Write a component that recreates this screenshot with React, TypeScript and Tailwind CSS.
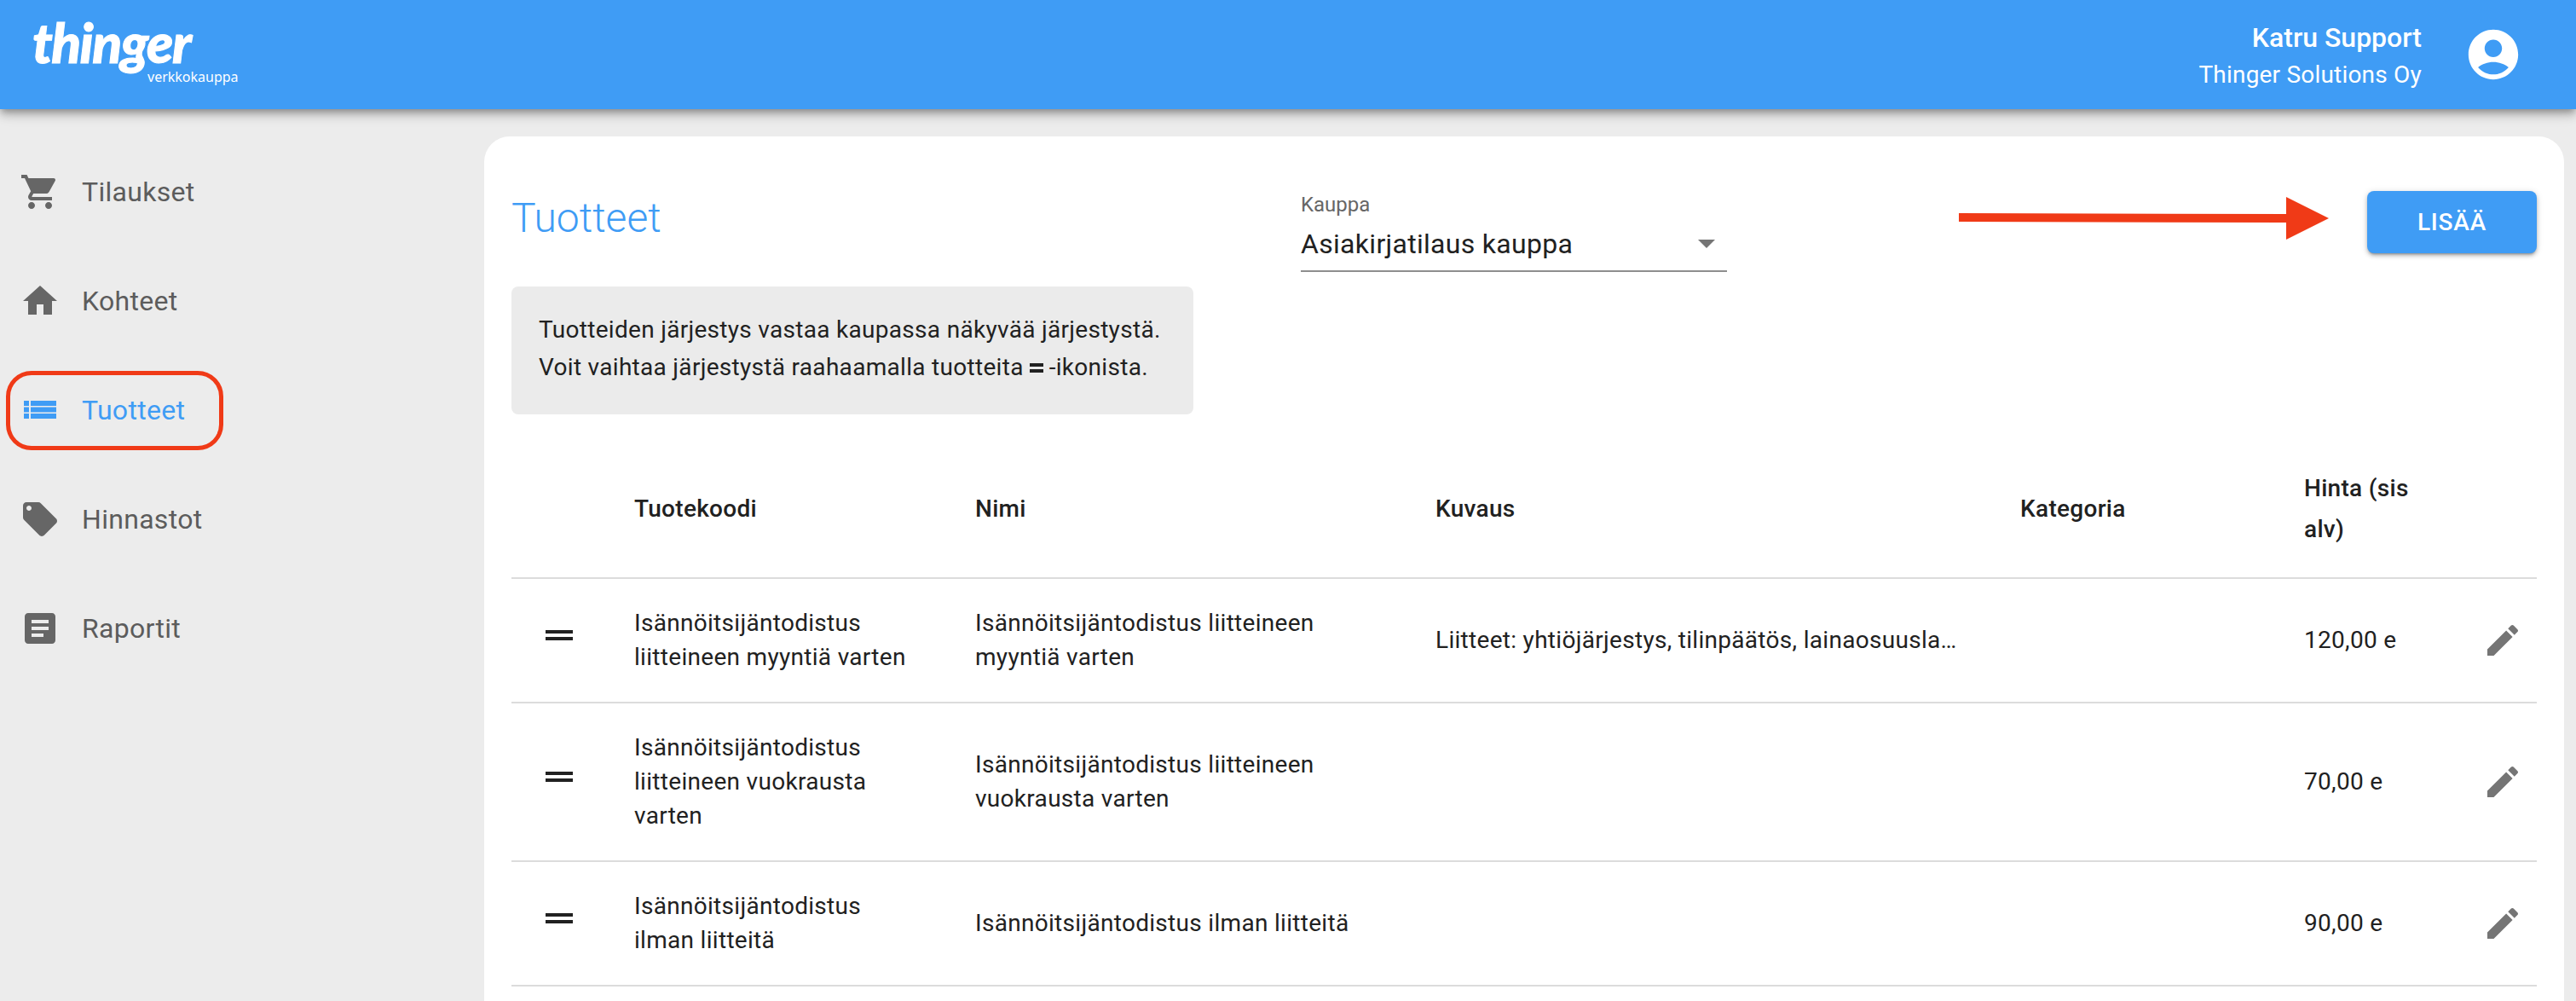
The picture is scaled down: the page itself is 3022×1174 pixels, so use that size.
import React from "react";

const roboto = "font-['Roboto',sans-serif]";

function Icon({ d, className }: { d: string; className: string }) {
  return (
    <svg viewBox="0 0 24 24" fill="currentColor" className={className}>
      <path d={d} />
    </svg>
  );
}

const paths = {
  cart: "M7 18c-1.1 0-1.99.9-1.99 2S5.9 22 7 22s2-.9 2-2-.9-2-2-2zM1 2v2h2l3.6 7.59-1.35 2.45c-.16.28-.25.61-.25.96 0 1.1.9 2 2 2h12v-2H7.42c-.14 0-.25-.11-.25-.25l.03-.12.9-1.63h7.45c.75 0 1.41-.41 1.75-1.03l3.58-6.49c.08-.14.12-.31.12-.48 0-.55-.45-1-1-1H5.21l-.94-2H1zm16 16c-1.1 0-1.99.9-1.99 2s.89 2 1.99 2 2-.9 2-2-.9-2-2-2z",
  home: "M10 20v-6h4v6h5v-8h3L12 3 2 12h3v8z",
  list: "M2.5 6.5h3v3h-3zM2.5 10.25h3v3h-3zM2.5 14h3v3h-3zM6.5 6.5h15v3h-15zM6.5 10.25h15v3h-15zM6.5 14h15v3h-15z",
  tag: "M21.41 11.58l-9-9C12.05 2.22 11.55 2 11 2H4c-1.1 0-2 .9-2 2v7c0 .55.22 1.05.59 1.42l9 9c.36.36.86.58 1.41.58.55 0 1.05-.22 1.41-.59l7-7c.37-.36.59-.86.59-1.41 0-.55-.23-1.06-.59-1.42zM5.5 7C4.67 7 4 6.33 4 5.5S4.67 4 5.5 4 7 4.67 7 5.5 6.33 7 5.5 7z",
  article: "M19 3H5c-1.1 0-2 .9-2 2v14c0 1.1.9 2 2 2h14c1.1 0 2-.9 2-2V5c0-1.1-.9-2-2-2zm-5 14H7v-2h7v2zm3-4H7v-2h10v2zm0-4H7V7h10v2z",
  account: "M12 2C6.48 2 2 6.48 2 12s4.48 10 10 10 10-4.48 10-10S17.52 2 12 2zm0 4c1.93 0 3.5 1.57 3.5 3.5S13.93 13 12 13s-3.5-1.57-3.5-3.5S10.07 6 12 6zm0 14c-2.03 0-4.43-.82-6.14-2.88C7.55 15.8 9.68 15 12 15s4.45.8 6.14 2.12C16.43 19.18 14.03 20 12 20z",
  edit: "M3 17.25V21h3.75L17.81 9.94l-3.75-3.75L3 17.25zM20.71 7.04c.39-.39.39-1.02 0-1.41l-2.34-2.34c-.39-.39-1.02-.39-1.41 0l-1.83 1.83 3.75 3.75 1.83-1.83z",
  drag: "M20 9H4v2h16V9zM4 15h16v-2H4v2z",
};

const navItems = [
  { label: "Tilaukset", icon: paths.cart },
  { label: "Kohteet", icon: paths.home },
  { label: "Tuotteet", icon: paths.list, active: true },
  { label: "Hinnastot", icon: paths.tag },
  { label: "Raportit", icon: paths.article },
];

const rows = [
  {
    code: "Isännöitsijäntodistus liitteineen myyntiä varten",
    name: "Isännöitsijäntodistus liitteineen myyntiä varten",
    desc: "Liitteet: yhtiöjärjestys, tilinpäätös, lainaosuuslaskelma",
    price: "120,00 e",
  },
  {
    code: "Isännöitsijäntodistus liitteineen vuokrausta varten",
    name: "Isännöitsijäntodistus liitteineen vuokrausta varten",
    desc: "",
    price: "70,00 e",
  },
  {
    code: "Isännöitsijäntodistus ilman liitteitä",
    name: "Isännöitsijäntodistus ilman liitteitä",
    desc: "",
    price: "90,00 e",
  },
];

function Header() {
  return (
    <div className="relative z-10 flex h-[128px] shrink-0 items-start justify-between bg-[#3f9cf5] shadow-[0_4px_8px_-2px_rgba(0,0,0,0.3),0_8px_10px_0_rgba(0,0,0,0.14),0_2px_20px_0_rgba(0,0,0,0.12)]">
      <div className="relative ml-[38px] mt-[24px] h-[76px] w-[250px] text-white">
        <span className="block font-['Lato',sans-serif] text-[64px] font-black italic leading-[52px] tracking-[-1.5px] [-webkit-text-stroke:1px_white]">
          thinger
        </span>
        <span className="absolute left-[135px] top-[56px] font-['Noto_Sans',sans-serif] text-[16px] leading-[20px] text-white">
          verkkokauppa
        </span>
      </div>
      <div className="mr-[62px] flex items-start text-white">
        <div className={`mt-[22px] flex flex-col items-end ${roboto}`}>
          <span className="text-[32px] font-medium leading-[44px]">Katru Support</span>
          <span className="text-[28px] leading-[44px] tracking-[0.2px]">Thinger Solutions Oy</span>
        </div>
        <Icon d={paths.account} className="ml-[49px] mt-[29px] h-[70px] w-[70px] text-white" />
      </div>
    </div>
  );
}

function Sidebar() {
  return (
    <div className={`relative w-[568px] shrink-0 pt-[33px] ${roboto}`}>
      {navItems.map((item) => (
        <div key={item.label} className="flex h-[128px] items-center pl-[23px]">
          <Icon d={item.icon} className={`h-[48px] w-[48px] ${item.active ? "text-[#3f9cf5]" : "text-[#666666]"}`} />
          <span
            className={`ml-[25px] text-[32px] leading-[48px] tracking-[0.3px] ${item.active ? "text-[#3f9cf5]" : "text-[#5c5c5c]"}`}
          >
            {item.label}
          </span>
        </div>
      ))}
      {/* punainen korostus valikon paalla */}
      <div className="absolute left-[7px] top-[307px] h-[93px] w-[255px] rounded-[30px] border-[5px] border-[#f03a17]" />
    </div>
  );
}

function Toolbar() {
  return (
    <div className="flex items-start justify-between">
      <div className="mt-[68px] w-[926px] text-[48px] font-light leading-[56px] text-[#3f9cf5]">Tuotteet</div>
      <div className="mt-[64px] w-[500px] border-b-2 border-[#8e8e8e]">
        <div className="text-[24px] leading-[32px] text-[#666666]">Kauppa</div>
        <div className="flex h-[61px] items-center justify-between pb-[2px]">
          <span className="text-[32px] leading-[48px] tracking-[0.3px] text-[#212121]">Asiakirjatilaus kauppa</span>
          <div className="mr-[14px] h-0 w-0 border-x-[10px] border-t-[10px] border-x-transparent border-t-[#757575]" />
        </div>
      </div>
      <button className="ml-auto mt-[64px] flex h-[73px] w-[199px] items-center justify-center rounded-[8px] bg-[#3f9cf5] text-[28px] font-medium tracking-[0.8px] text-white shadow-[0_3px_3px_-2px_rgba(0,0,0,0.3),0_3px_5px_0_rgba(0,0,0,0.2),0_1px_8px_0_rgba(0,0,0,0.12)]">
        LISÄÄ
      </button>
    </div>
  );
}

function Notice() {
  return (
    <div className="mt-[17px] flex h-[150px] w-[800px] flex-col justify-center rounded-[8px] bg-[#ebebeb] px-[32px] pb-[4px] text-[28px] leading-[44px] tracking-[0.3px] text-[#212121]">
      <div>Tuotteiden järjestys vastaa kaupassa näkyvää järjestystä.</div>
      <div className="flex items-center">
        Voit vaihtaa järjestystä raahaamalla tuotteita
        <span className="mx-[7px] flex h-[16px] w-[16px] flex-col justify-center gap-[3px]">
          <span className="h-[4px] bg-[#212121]" />
          <span className="h-[4px] bg-[#212121]" />
        </span>
        -ikonista.
      </div>
    </div>
  );
}

function ProductTable() {
  return (
    <table className="mt-[31px] w-[2376px] table-fixed text-[28px] leading-[40px] tracking-[0.3px] text-[#212121]">
      <colgroup>
        <col className="w-[144px]" />
        <col className="w-[400px]" />
        <col className="w-[540px]" />
        <col className="w-[686px]" />
        <col className="w-[333px]" />
        <col className="w-[197px]" />
        <col className="w-[76px]" />
      </colgroup>
      <thead>
        <tr className="border-b-2 border-[#dcdcdc] text-left font-medium">
          <th />
          <th className="py-[32px] font-medium">Tuotekoodi</th>
          <th className="py-[32px] font-medium">Nimi</th>
          <th className="py-[32px] font-medium">Kuvaus</th>
          <th className="py-[32px] font-medium">Kategoria</th>
          <th className="py-[32px] pr-[40px] font-medium leading-[48px]">Hinta (sis alv)</th>
          <th />
        </tr>
      </thead>
      <tbody>
        {rows.map((row) => (
          <tr key={row.code} className="border-b-2 border-[#dcdcdc]">
            <td className="pl-[32px]">
              <Icon d={paths.drag} className="mb-[12px] h-[48px] w-[48px] text-[#212121]" />
            </td>
            <td className="py-[32px] pr-[70px]">{row.code}</td>
            <td className="py-[32px] pr-[80px]">{row.name}</td>
            <td className="py-[32px]">
              <div className="w-[613px] truncate">{row.desc}</div>
            </td>
            <td />
            <td>{row.price}</td>
            <td className="pl-[12px]">
              <Icon d={paths.edit} className="h-[48px] w-[48px] text-[#757575]" />
            </td>
          </tr>
        ))}
      </tbody>
    </table>
  );
}

export default function App() {
  return (
    <div className={`relative flex h-[1174px] w-[3022px] flex-col overflow-hidden bg-[#ececec] ${roboto}`}>
      <Header />
      <div className="flex min-h-0 flex-1">
        <Sidebar />
        <div className="mb-[-40px] mr-[15px] mt-[32px] flex-1 rounded-[30px] bg-white px-[32px]">
          <Toolbar />
          <Notice />
          <ProductTable />
        </div>
      </div>
      {/* punainen nuoli */}
      <svg className="absolute left-[2298px] top-[231px] h-[50px] w-[434px]" viewBox="0 0 434 50">
        <polygon points="0,19 384,20 384,0 434,25 384,50 384,30 0,29" fill="#f03a17" />
      </svg>
    </div>
  );
}
